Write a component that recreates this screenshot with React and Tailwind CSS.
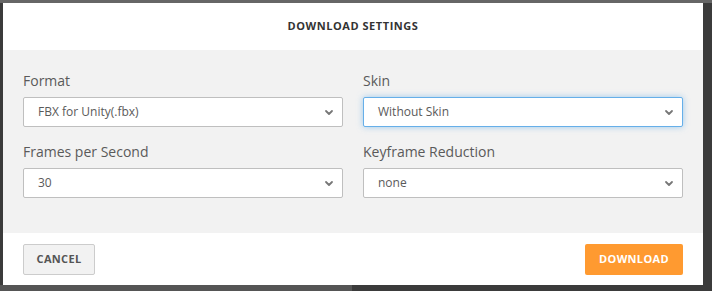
import React from 'react';

const font = { fontFamily: '"Open Sans", "Noto Sans", sans-serif' };

function Chevron() {
  return (
    <svg width="10" height="7" viewBox="0 0 10 7" className="shrink-0">
      <path d="M2 2 L5 5 L8 2" fill="none" stroke="#777" strokeWidth="1.8" strokeLinecap="round" strokeLinejoin="round" />
    </svg>
  );
}

function Field({ label, value, focused = false }) {
  return (
    <div className="flex flex-col">
      <label className="text-[14px] leading-[18px] text-[#5a5a5a] mb-[7px]">{label}</label>
      <div
        className={
          focused
            ? 'h-[30px] flex items-center justify-between bg-white border border-[#66afe9] rounded-[2px] pl-[14px] pr-[8px] shadow-[0_0_6px_rgba(102,175,233,0.6)]'
            : 'h-[30px] flex items-center justify-between bg-white border border-[#bfbfbf] rounded-[2px] pl-[14px] pr-[8px]'
        }
      >
        <span className="text-[12px] text-[#5a5a5a]">{value}</span>
        <Chevron />
      </div>
    </div>
  );
}

export default function App() {
  return (
    <div className="w-[712px] h-[291px] bg-[#3b3b3b] relative overflow-hidden" style={font}>
      <div className="absolute left-0 top-0 w-full h-[3px] bg-[#666]" />
      <div className="absolute left-0 bottom-0 w-[352px] h-[6px] bg-[#555]" />
      <div className="absolute left-[3px] top-[3px] w-[700px] h-[282px] bg-white flex flex-col">
        <div className="h-[47px] flex items-center justify-center">
          <h2 className="text-[11px] font-bold tracking-[0.05em] text-[#333] uppercase">Download Settings</h2>
        </div>
        <div className="h-[183px] bg-[#f2f2f2] px-[20px] pt-[22px]">
          <div className="grid grid-cols-2 gap-x-[20px] gap-y-[16px]">
            <Field label="Format" value="FBX for Unity(.fbx)" />
            <Field label="Skin" value="Without Skin" focused />
            <Field label="Frames per Second" value="30" />
            <Field label="Keyframe Reduction" value="none" />
          </div>
        </div>
        <div className="flex-1 flex items-center justify-between px-[20px]">
          <button className="w-[72px] h-[31px] bg-[#f2f2f2] border border-[#ccc] rounded-[2px] text-[11px] font-bold text-[#555] tracking-[0.03em]">
            CANCEL
          </button>
          <button className="w-[98px] h-[31px] bg-[#ff9a30] rounded-[2px] text-[11px] font-bold text-white tracking-[0.03em]">
            DOWNLOAD
          </button>
        </div>
      </div>
    </div>
  );
}
